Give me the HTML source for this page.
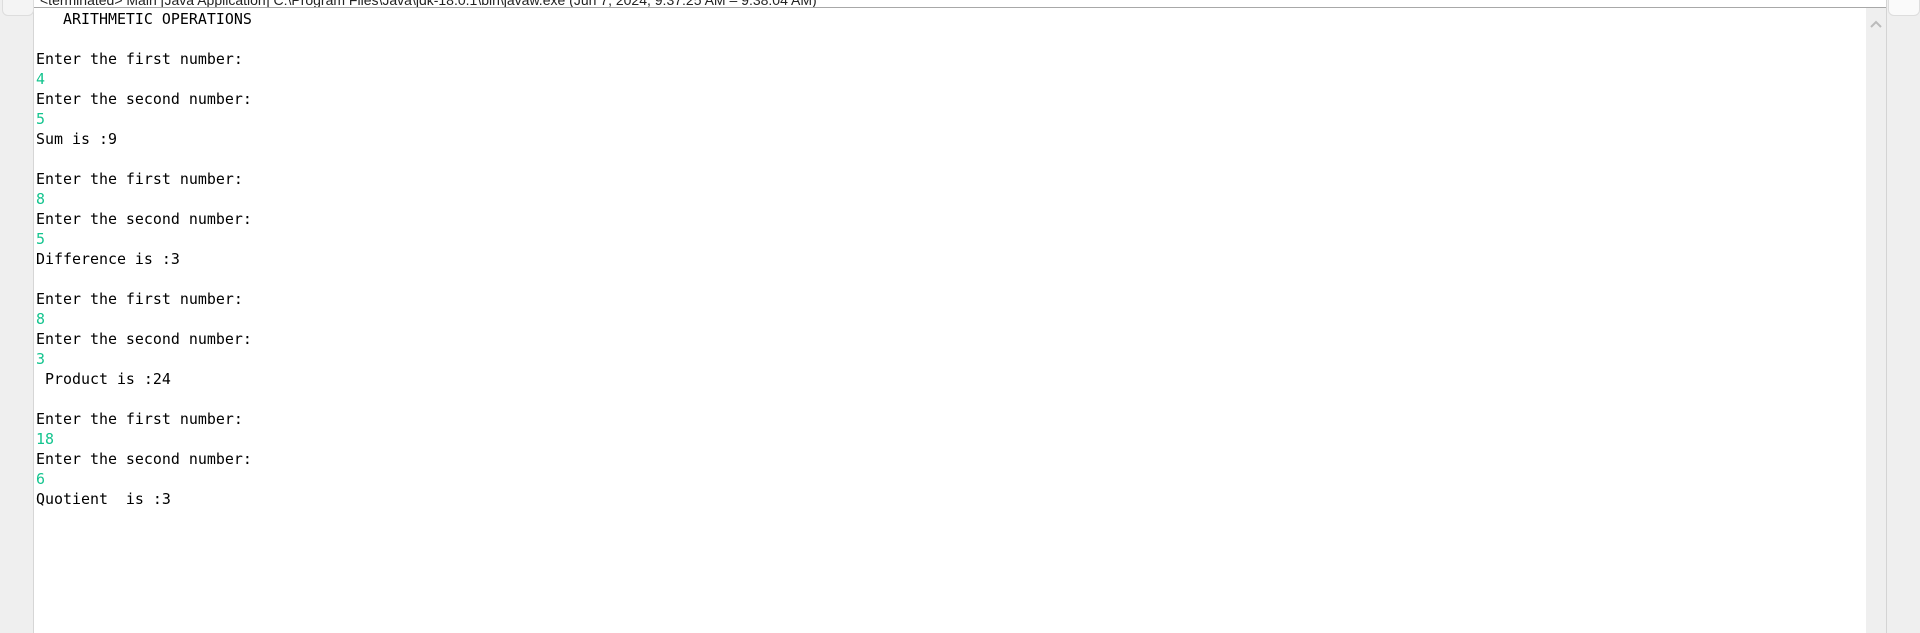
<!DOCTYPE html>
<html><head><style>
html,body{margin:0;padding:0;width:1920px;height:633px;overflow:hidden;background:#fff;position:relative}
.gut{position:absolute;left:0;top:0;width:33px;height:633px;background:#efefef;border-right:1px solid #d6d6d6}
.hdr{position:absolute;left:40px;top:-8px;font:14px "Liberation Sans",sans-serif;color:#222;white-space:nowrap}
.hl{position:absolute;left:34px;top:7px;width:1852px;height:1px;background:#a8a8a8}
.sb{position:absolute;left:1866px;top:8px;width:20px;height:625px;background:#efefef}
.rp{position:absolute;left:1886px;top:0;width:34px;height:633px;background:#efefef;border-left:1px solid #d4d4d4}
.out{position:absolute;left:36px;top:9px;font:14.95px/20px "DejaVu Sans Mono","Liberation Mono",monospace;color:#000;white-space:pre;margin:0}
.g{color:#14c48e}
</style></head><body>
<div class="gut"></div>
<div style="position:absolute;left:2px;top:-6px;width:30px;height:20px;border:1px solid #ddd;border-radius:6px;background:#f4f4f4"></div>
<div class="hdr">&lt;terminated&gt; Main [Java Application] C:\Program Files\Java\jdk-18.0.1\bin\javaw.exe (Jun 7, 2024, 9:37:25 AM – 9:38:04 AM)</div>
<div class="hl"></div>
<div class="sb"><svg width="20" height="20" style="position:absolute;top:6px;left:0"><path d="M5 13 L10 8 L15 13" stroke="#bbb" stroke-width="2" fill="none"/></svg></div>
<div class="rp"><div style="position:absolute;left:1px;top:-6px;width:30px;height:20px;border:1px solid #ddd;border-radius:6px;background:#fafafa"></div></div>
<pre class="out">   ARITHMETIC OPERATIONS

Enter the first number:
<span class="g">4</span>
Enter the second number:
<span class="g">5</span>
Sum is :9

Enter the first number:
<span class="g">8</span>
Enter the second number:
<span class="g">5</span>
Difference is :3

Enter the first number:
<span class="g">8</span>
Enter the second number:
<span class="g">3</span>
 Product is :24

Enter the first number:
<span class="g">18</span>
Enter the second number:
<span class="g">6</span>
Quotient  is :3</pre>
</body></html>
